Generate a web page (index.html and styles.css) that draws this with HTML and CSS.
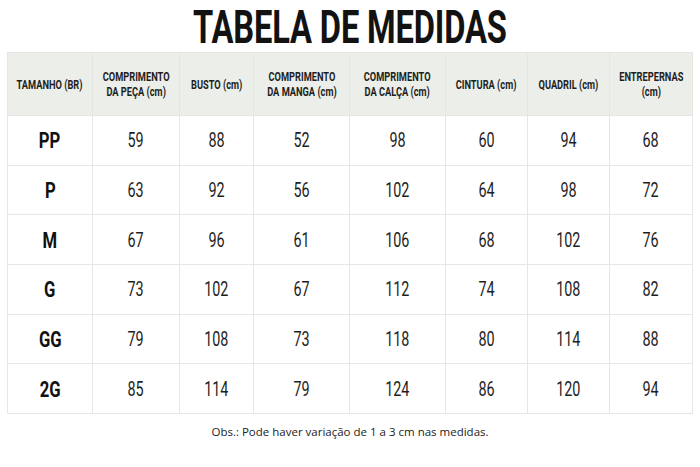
FILE: index.html
```html
<!DOCTYPE html>
<html lang="pt-BR">
<head>
<meta charset="utf-8">
<title>Tabela de Medidas</title>
<link rel="stylesheet" href="styles.css">
</head>
<body>
<main class="page">
  <h1 class="title"><span class="squeeze">TABELA DE MEDIDAS</span></h1>
  <div class="table">
    <div class="cell head"><span class="squeeze">TAMANHO (BR)</span></div>
    <div class="cell head"><span class="squeeze">COMPRIMENTO<br>DA PEÇA (cm)</span></div>
    <div class="cell head"><span class="squeeze">BUSTO (cm)</span></div>
    <div class="cell head"><span class="squeeze">COMPRIMENTO<br>DA MANGA (cm)</span></div>
    <div class="cell head"><span class="squeeze">COMPRIMENTO<br>DA CALÇA (cm)</span></div>
    <div class="cell head"><span class="squeeze">CINTURA (cm)</span></div>
    <div class="cell head"><span class="squeeze">QUADRIL (cm)</span></div>
    <div class="cell head"><span class="squeeze">ENTREPERNAS<br>(cm)</span></div>

    <div class="cell size"><span class="squeeze">PP</span></div>
    <div class="cell num"><span class="squeeze">59</span></div>
    <div class="cell num"><span class="squeeze">88</span></div>
    <div class="cell num"><span class="squeeze">52</span></div>
    <div class="cell num"><span class="squeeze">98</span></div>
    <div class="cell num"><span class="squeeze">60</span></div>
    <div class="cell num"><span class="squeeze">94</span></div>
    <div class="cell num"><span class="squeeze">68</span></div>

    <div class="cell size"><span class="squeeze">P</span></div>
    <div class="cell num"><span class="squeeze">63</span></div>
    <div class="cell num"><span class="squeeze">92</span></div>
    <div class="cell num"><span class="squeeze">56</span></div>
    <div class="cell num"><span class="squeeze">102</span></div>
    <div class="cell num"><span class="squeeze">64</span></div>
    <div class="cell num"><span class="squeeze">98</span></div>
    <div class="cell num"><span class="squeeze">72</span></div>

    <div class="cell size"><span class="squeeze">M</span></div>
    <div class="cell num"><span class="squeeze">67</span></div>
    <div class="cell num"><span class="squeeze">96</span></div>
    <div class="cell num"><span class="squeeze">61</span></div>
    <div class="cell num"><span class="squeeze">106</span></div>
    <div class="cell num"><span class="squeeze">68</span></div>
    <div class="cell num"><span class="squeeze">102</span></div>
    <div class="cell num"><span class="squeeze">76</span></div>

    <div class="cell size"><span class="squeeze">G</span></div>
    <div class="cell num"><span class="squeeze">73</span></div>
    <div class="cell num"><span class="squeeze">102</span></div>
    <div class="cell num"><span class="squeeze">67</span></div>
    <div class="cell num"><span class="squeeze">112</span></div>
    <div class="cell num"><span class="squeeze">74</span></div>
    <div class="cell num"><span class="squeeze">108</span></div>
    <div class="cell num"><span class="squeeze">82</span></div>

    <div class="cell size"><span class="squeeze">GG</span></div>
    <div class="cell num"><span class="squeeze">79</span></div>
    <div class="cell num"><span class="squeeze">108</span></div>
    <div class="cell num"><span class="squeeze">73</span></div>
    <div class="cell num"><span class="squeeze">118</span></div>
    <div class="cell num"><span class="squeeze">80</span></div>
    <div class="cell num"><span class="squeeze">114</span></div>
    <div class="cell num"><span class="squeeze">88</span></div>

    <div class="cell size"><span class="squeeze">2G</span></div>
    <div class="cell num"><span class="squeeze">85</span></div>
    <div class="cell num"><span class="squeeze">114</span></div>
    <div class="cell num"><span class="squeeze">79</span></div>
    <div class="cell num"><span class="squeeze">124</span></div>
    <div class="cell num"><span class="squeeze">86</span></div>
    <div class="cell num"><span class="squeeze">120</span></div>
    <div class="cell num"><span class="squeeze">94</span></div>
  </div>
  <p class="note">Obs.: Pode haver variação de 1 a 3 cm nas medidas.</p>
</main>
</body>
</html>
```

FILE: styles.css
```css
* { box-sizing: border-box; }

html, body {
  margin: 0;
  padding: 0;
  background: #ffffff;
}

body {
  font-family: Roboto, "Liberation Sans", sans-serif;
  color: #1c1c1c;
}

.page {
  width: 700px;
  height: 467px;
  display: flex;
  flex-direction: column;
  align-items: center;
}

.squeeze {
  display: inline-block;
  white-space: nowrap;
  transform: scaleX(0.74);
  transform-origin: center center;
}

.title {
  margin: 2px 0 0;
  height: 50px;
  display: flex;
  justify-content: center;
  align-items: center;
  font-size: 46px;
  font-weight: 700;
  line-height: 1;
  color: #121212;
  letter-spacing: -0.2px;
}

.title .squeeze {
  transform: scaleX(0.71);
}

.table {
  display: grid;
  grid-template-columns: 84px 86px 73px 95px 95px 81px 81px 82px;
  grid-template-rows: 62px repeat(6, 48.67px);
  gap: 1px;
  padding: 1px;
  background: #e6e6e4;
}

.cell {
  display: flex;
  align-items: center;
  justify-content: center;
  background: #ffffff;
  text-align: center;
}

.head {
  background: #eceee9;
  font-size: 12.5px;
  font-weight: 700;
  line-height: 15px;
  color: #1e1e1e;
}

.size {
  font-size: 22.5px;
  font-weight: 700;
  color: #111111;
}

.size .squeeze {
  transform: scaleX(0.74);
}

.num {
  font-size: 20.5px;
  font-weight: 400;
  color: #1e1e1e;
}

.num .squeeze {
  transform: scaleX(0.7);
}

.note {
  margin: 10px 0 0;
  font-family: "Open Sans", "Liberation Sans", sans-serif;
  font-size: 11.5px;
  color: #222222;
}
```
